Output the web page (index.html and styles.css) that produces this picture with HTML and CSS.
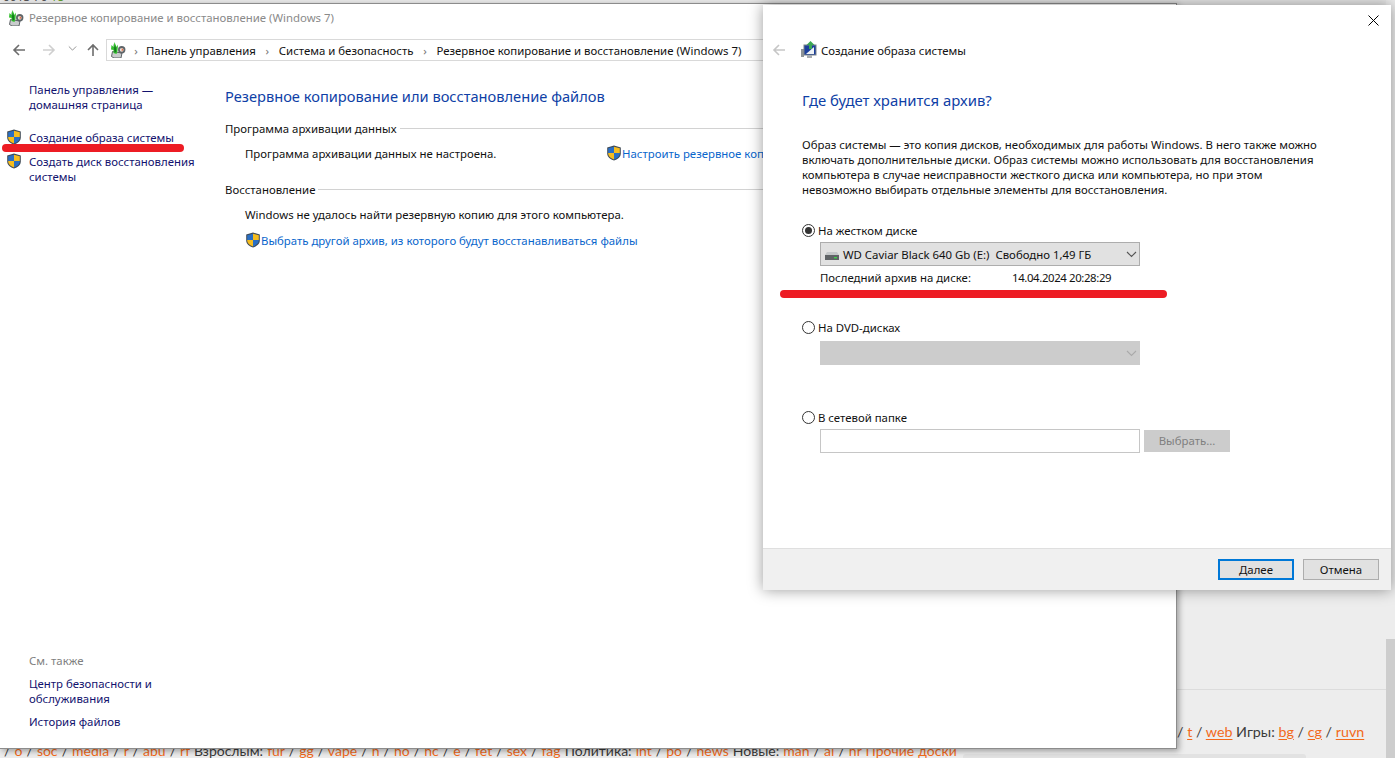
FILE: index.html
```html
<!DOCTYPE html>
<html lang="ru">
<head>
<meta charset="utf-8">
<title>Резервное копирование</title>
<link rel="stylesheet" href="styles.css">
</head>
<body>
<svg class="defs" width="0" height="0" aria-hidden="true">
  <defs>
    <symbol id="shield" viewBox="0 0 16 16">
      <path d="M8 .5 14.8 2.6V8.5C14.8 12 11.5 14.4 8 15.6 4.5 14.4 1.2 12 1.2 8.5V2.6Z" fill="#3f4a55"/>
      <path d="M8 1.8V8H2.2V3.3Z" fill="#2a6fc4"/>
      <path d="M8 1.8 13.8 3.3V8H8Z" fill="#f6bd1e"/>
      <path d="M2.2 8H8V14.5C5.2 13.4 2.2 11.4 2.2 8.5Z" fill="#f6bd1e"/>
      <path d="M8 8H13.8V8.5C13.8 11.4 10.8 13.4 8 14.5Z" fill="#2a6fc4"/>
    </symbol>
    <symbol id="backup" viewBox="0 0 16 16">
      <path d="M2.5 9.5 1.5 14.5 4 16H11L12 11Z" fill="#c9cccd" stroke="#4f5559" stroke-width=".9"/>
      <path d="M1.5 3 3.5 5 4.5 0 6.5 5 8 2.5 7.5 9 6.5 12 3.5 11 3.5 8 1 7.5Z" fill="#35c02f"/>
      <path d="M3.5 1.5 5 6 6 3 6.3 10 4.5 10.5Z" fill="#147a1f"/>
      <circle cx="11.7" cy="7.8" r="3.7" fill="#5e6468"/>
      <circle cx="11.7" cy="7.8" r="1.9" fill="#e9e4df"/>
      <path d="M11.7 6 13.5 7.8 11.7 9.4Z" fill="#e4683f"/>
    </symbol>
    <symbol id="back" viewBox="0 0 14 14">
      <path d="M13 7H2M7 2 2 7l5 5" fill="none" stroke="currentColor" stroke-width="1.6"/>
    </symbol>
    <symbol id="chev" viewBox="0 0 11 7">
      <path d="M1 1 5.5 5.5 10 1" fill="none" stroke="currentColor" stroke-width="1.1"/>
    </symbol>
  </defs>
</svg>

<div class="desktop">
  <div class="page-behind">
    <div class="top-strip"><span class="strip-text">0013 76 <em>18</em></span></div>
    <div class="rule"></div>
    <div class="page-nav upper">/ <a>t</a> / <a>web</a> Игры: <a>bg</a> / <a>cg</a> / <a>ruvn</a></div>
    <div class="page-nav lower">/ <a>o</a> / <a>soc</a> / <a>media</a> / <a>r</a> / <a>abu</a> / <a>rf</a> Взрослым: <a>fur</a> / <a>gg</a> / <a>vape</a> / <a>h</a> / <a>ho</a> / <a>hc</a> / <a>e</a> / <a>fet</a> / <a>sex</a> / <a>fag</a> Политика: <a>int</a> / <a>po</a> / <a>news</a> Новые: <a>man</a> / <a>ai</a> / <a>hr</a> <a>Прочие доски</a></div>
    <div class="page-box"></div>
    <div class="scroll-thumb"></div>
  </div>

  <section class="window">
    <header class="titlebar">
      <svg class="ico16"><use href="#backup"/></svg>
      <span>Резервное копирование и восстановление (Windows 7)</span>
    </header>
    <nav class="navrow">
      <svg class="nav-back"><use href="#back"/></svg>
      <svg class="nav-forward"><use href="#back"/></svg>
      <svg class="nav-down"><use href="#chev"/></svg>
      <svg class="nav-up"><use href="#back"/></svg>
      <div class="address">
        <svg class="ico16"><use href="#backup"/></svg>
        <i class="sep first-sep">›</i><span>Панель управления</span>
        <i class="sep">›</i><span>Система и безопасность</span>
        <i class="sep">›</i><span>Резервное копирование и восстановление (Windows 7)</span>
      </div>
    </nav>
    <div class="cols">
      <aside class="side">
        <div class="side-top">
          <a class="side-link first">Панель управления —<br>домашняя страница</a>
          <a class="side-link shielded"><svg class="shield"><use href="#shield"/></svg>Создание образа системы</a>
          <a class="side-link shielded"><svg class="shield"><use href="#shield"/></svg>Создать диск восстановления<br>системы</a>
        </div>
        <div class="side-bottom">
          <div class="see-also">См. также</div>
          <a class="side-link">Центр безопасности и<br>обслуживания</a>
          <a class="side-link">История файлов</a>
        </div>
      </aside>
      <main class="content">
        <h1 class="heading">Резервное копирование или восстановление файлов</h1>
        <div class="group-title"><span>Программа архивации данных</span><b></b></div>
        <div class="row-between">
          <span class="status">Программа архивации данных не настроена.</span>
          <a class="link"><svg class="shield"><use href="#shield"/></svg>Настроить резервное копирование</a>
        </div>
        <div class="group-title restore"><span>Восстановление</span><b></b></div>
        <p class="indent">Windows не удалось найти резервную копию для этого компьютера.</p>
        <a class="link indent other"><svg class="shield"><use href="#shield"/></svg>Выбрать другой архив, из которого будут восстанавливаться файлы</a>
      </main>
    </div>
  </section>

  <section class="dialog">
    <div class="dlg-body">
      <svg class="close" viewBox="0 0 11 11"><path d="M.5.5 10.5 10.5M10.5.5.5 10.5" stroke="#000" stroke-width="1" fill="none"/></svg>
      <div class="dlg-head">
        <svg class="dlg-back"><use href="#back"/></svg>
        <svg class="dlg-icon" viewBox="0 0 18 18">
          <rect x="1" y="8" width="3" height="8" fill="#8d9397"/>
          <rect x="4" y="4" width="12" height="10" fill="#1b3f9c" stroke="#7d8489"/>
          <path d="M6 13 14 6V13Z" fill="#eef2f6"/>
          <path d="M10.5 0 14.5 4H12V8H9V4H6.5Z" fill="#3aa655"/>
          <rect x="7" y="14" width="5" height="3" fill="#a8adb0"/>
        </svg>
        <span>Создание образа системы</span>
      </div>
      <h2 class="dlg-title">Где будет хранится архив?</h2>
      <p class="dlg-text">Образ системы — это копия дисков, необходимых для работы Windows. В него также можно<br>включать дополнительные диски. Образ системы можно использовать для восстановления<br>компьютера в случае неисправности жесткого диска или компьютера, но при этом<br>невозможно выбирать отдельные элементы для восстановления.</p>

      <div class="radio-row hd"><i class="radio on"></i>На жестком диске</div>
      <div class="combo">
        <svg class="disk" viewBox="0 0 14 8"><rect y="3" width="14" height="5" fill="#5f6366"/><path d="M2 0H12L14 3H0Z" fill="#c4c7c9"/><rect x="9" y="5" width="3" height="1.4" fill="#3ecf4a"/></svg>
        <span>WD Caviar Black 640 Gb (E:)&nbsp; Свободно 1,49 ГБ</span>
        <svg class="combo-chev"><use href="#chev"/></svg>
      </div>
      <div class="last-row"><span class="last-label">Последний архив на диске:</span><span class="last-date">14.04.2024 20:28:29</span></div>

      <div class="radio-row dvd"><i class="radio"></i>На DVD-дисках</div>
      <div class="combo disabled"><svg class="combo-chev"><use href="#chev"/></svg></div>

      <div class="radio-row net"><i class="radio"></i>В сетевой папке</div>
      <div class="net-row">
        <div class="input"></div>
        <div class="choose">Выбрать...</div>
      </div>
    </div>
    <footer class="dlg-foot">
      <div class="btn primary">Далее</div>
      <div class="btn">Отмена</div>
    </footer>
  </section>

  <div class="mark mark-side"></div>
  <div class="mark mark-dlg"></div>
</div>
</body>
</html>
```

FILE: styles.css
```css
* { box-sizing: border-box; }
html, body { margin: 0; padding: 0; height: 100%; overflow: hidden; }
body { background: #ededed; font: 11.4px/15px "Noto Sans", "Open Sans", sans-serif; color: #1a1a1a; }
.defs { position: absolute; }
a { color: inherit; text-decoration: none; }

.desktop { position: relative; width: 1395px; height: 758px; overflow: hidden; }

.page-behind { position: absolute; inset: 0; }
.top-strip { position: absolute; left: 0; top: 0; right: 9px; height: 14px; background: #e8e8e8; overflow: hidden; }
.strip-text { position: absolute; left: 3px; top: -11px; font-size: 12px; color: #555; }
.strip-text em { font-style: normal; color: #5f9a2f; }
.rule { position: absolute; left: 1176px; right: 9px; top: 689px; height: 1px; background: #dcdcdc; }
.page-nav { position: absolute; font: 14.3px/20px Lato, sans-serif; color: #3a3a3a; white-space: nowrap; }
.page-nav a { color: #f26a1b; text-decoration: underline; text-underline-offset: 2px; }
.upper { left: 1177px; top: 722px; }
.lower { left: 4px; top: 741px; font-size: 14px; word-spacing: .5px; }
.page-box { position: absolute; left: 963px; top: 754px; width: 343px; height: 10px; background: #e2e2e2; border-radius: 3px; }
.scroll-thumb { position: absolute; right: 0; top: 639px; width: 9px; height: 119px; background: #cdcdcd; }

.window { position: absolute; left: 0; top: 3px; width: 1177px; height: 746px; background: #fff; border: 1px solid #8c8c8c; border-left: 0; display: flex; flex-direction: column; box-shadow: 2px 2px 6px rgba(0,0,0,.35); }
.titlebar { height: 27px; padding: 0 0 0 8px; display: flex; align-items: center; gap: 5px; color: #8a8a8a; }
.ico16 { width: 16px; height: 16px; flex: none; }
.navrow { height: 23px; margin-top: 8px; position: relative; display: flex; align-items: center; }
.navrow > svg { position: absolute; color: #6d6d6d; width: 14px; height: 14px; }
.nav-back { left: 12px; top: 4px; }
.nav-forward { left: 42px; top: 4px; color: #cfcfcf !important; transform: scaleX(-1); }
.nav-down { left: 68px; top: 6px; width: 9px !important; height: 7px !important; color: #8a8a8a !important; }
.nav-up { left: 86px; top: 4px; transform: rotate(90deg); }
.address { position: absolute; left: 106px; top: 0; width: 1071px; height: 22px; border: 1px solid #d9d9d9; border-right: 0; display: flex; align-items: center; padding-left: 3px; color: #111; }
.sep { font-style: normal; color: #777; width: 23px; text-align: center; flex: none; }
.sep.first-sep { width: 20px; }

.cols { flex: 1; display: flex; min-height: 0; }
.side { width: 225px; flex: none; padding-left: 29px; display: flex; flex-direction: column; justify-content: space-between; padding-bottom: 19px; color: #12126e; }
.side-link { display: block; position: relative; }
.side-link.first { margin-top: 20px; }
.side-link.shielded { margin-top: 18px; }
.side-top .shielded + .shielded { margin-top: 9px; }
.side .shield { position: absolute; left: -23px; top: -1px; }
.shield { width: 16px; height: 16px; flex: none; }
.see-also { color: #808080; margin-bottom: 8px; }
.side-bottom .side-link + .side-link { margin-top: 8px; }

.content { flex: 1; min-width: 0; color: #111; }
.heading { margin: 24px 0 0; font-weight: 400; font-size: 14.65px; line-height: 21px; color: #0f3fa6; }
.group-title { display: flex; align-items: center; gap: 3px; margin-top: 14px; }
.group-title.restore { margin-top: 21px; }
.group-title b { flex: 1; height: 1px; background: #d2d2d2; }
.row-between { margin: 9px 0 0 20px; display: flex; align-items: center; white-space: nowrap; }
.status { width: 361px; flex: none; }
.link { color: #0a66cc; display: flex; align-items: center; white-space: nowrap; }
.indent { margin-left: 20px; }
p.indent { margin-top: 10px; margin-bottom: 0; }
.other { margin-top: 10px; }

.dialog { position: absolute; left: 763px; top: 5px; width: 628px; height: 585px; background: #fff; box-shadow: 0 0 14px rgba(0,0,0,.4); display: flex; flex-direction: column; }
.dlg-body { flex: 1; padding-left: 39px; position: relative; }
.close { position: absolute; right: 12px; top: 10px; width: 11px; height: 11px; }
.dlg-head { display: flex; align-items: center; height: 18px; margin: 36px 0 0 -30px; color: #111; }
.dlg-back { width: 14px; height: 14px; color: #c6c6c6; }
.dlg-icon { width: 18px; height: 18px; margin: 0 3px 0 14px; }
.dlg-title { margin: 31px 0 0; font-weight: 400; font-size: 14.9px; line-height: 21px; color: #0f3fa6; }
.dlg-text { margin: 26px 0 0; color: #111; white-space: nowrap; }
.radio-row { display: flex; align-items: center; gap: 3px; color: #111; }
.radio { width: 13px; height: 13px; border-radius: 50%; border: 1px solid #333; background: #fff; position: relative; flex: none; }
.radio.on::after { content: ""; position: absolute; inset: 2px; border-radius: 50%; background: #333; }
.hd { margin-top: 26px; }
.combo { margin: 4px 0 0 18px; width: 320px; height: 24px; background: #e1e1e1; border: 1px solid #adadad; display: flex; align-items: center; padding-left: 4px; position: relative; color: #111; }
.disk { width: 14px; height: 8px; margin: 4px 4px 0 0; flex: none; }
.combo-chev { position: absolute; right: 2px; top: 8px; width: 11px; height: 7px; color: #555; }
.combo.disabled { background: #cccccc; border-color: #cccccc; margin-top: 6px; }
.combo.disabled .combo-chev { color: #aaa; }
.last-row { margin: 4px 0 0 18px; display: flex; color: #111; }
.last-label { width: 192px; }
.last-date { letter-spacing: -.38px; }
.dvd { margin-top: 35px; }
.net { margin-top: 45px; }
.net-row { display: flex; margin: 4px 0 0 18px; gap: 4px; }
.input { width: 320px; height: 24px; border: 1px solid #c6c6c6; background: #fff; }
.choose { width: 86px; height: 22px; margin-top: 1px; padding-bottom: 1px; background: #cccccc; color: #7f7f7f; display: flex; align-items: center; justify-content: center; }

.dlg-foot { height: 42px; background: #f0f0f0; border-top: 1px solid #dfdfdf; display: flex; justify-content: flex-end; align-items: center; gap: 9px; padding: 0 12px 0 0; }
.btn { width: 76px; height: 21px; padding-bottom: 1px; background: #e1e1e1; border: 1px solid #adadad; display: flex; align-items: center; justify-content: center; color: #111; }
.btn.primary { border: 2px solid #0078d7; }

.mark { position: absolute; background: #ed1c24; border-radius: 4px; }
.mark-side { left: 2px; top: 144px; width: 182px; height: 8px; }
.mark-dlg { left: 780px; top: 290px; width: 387px; height: 8px; }
```
